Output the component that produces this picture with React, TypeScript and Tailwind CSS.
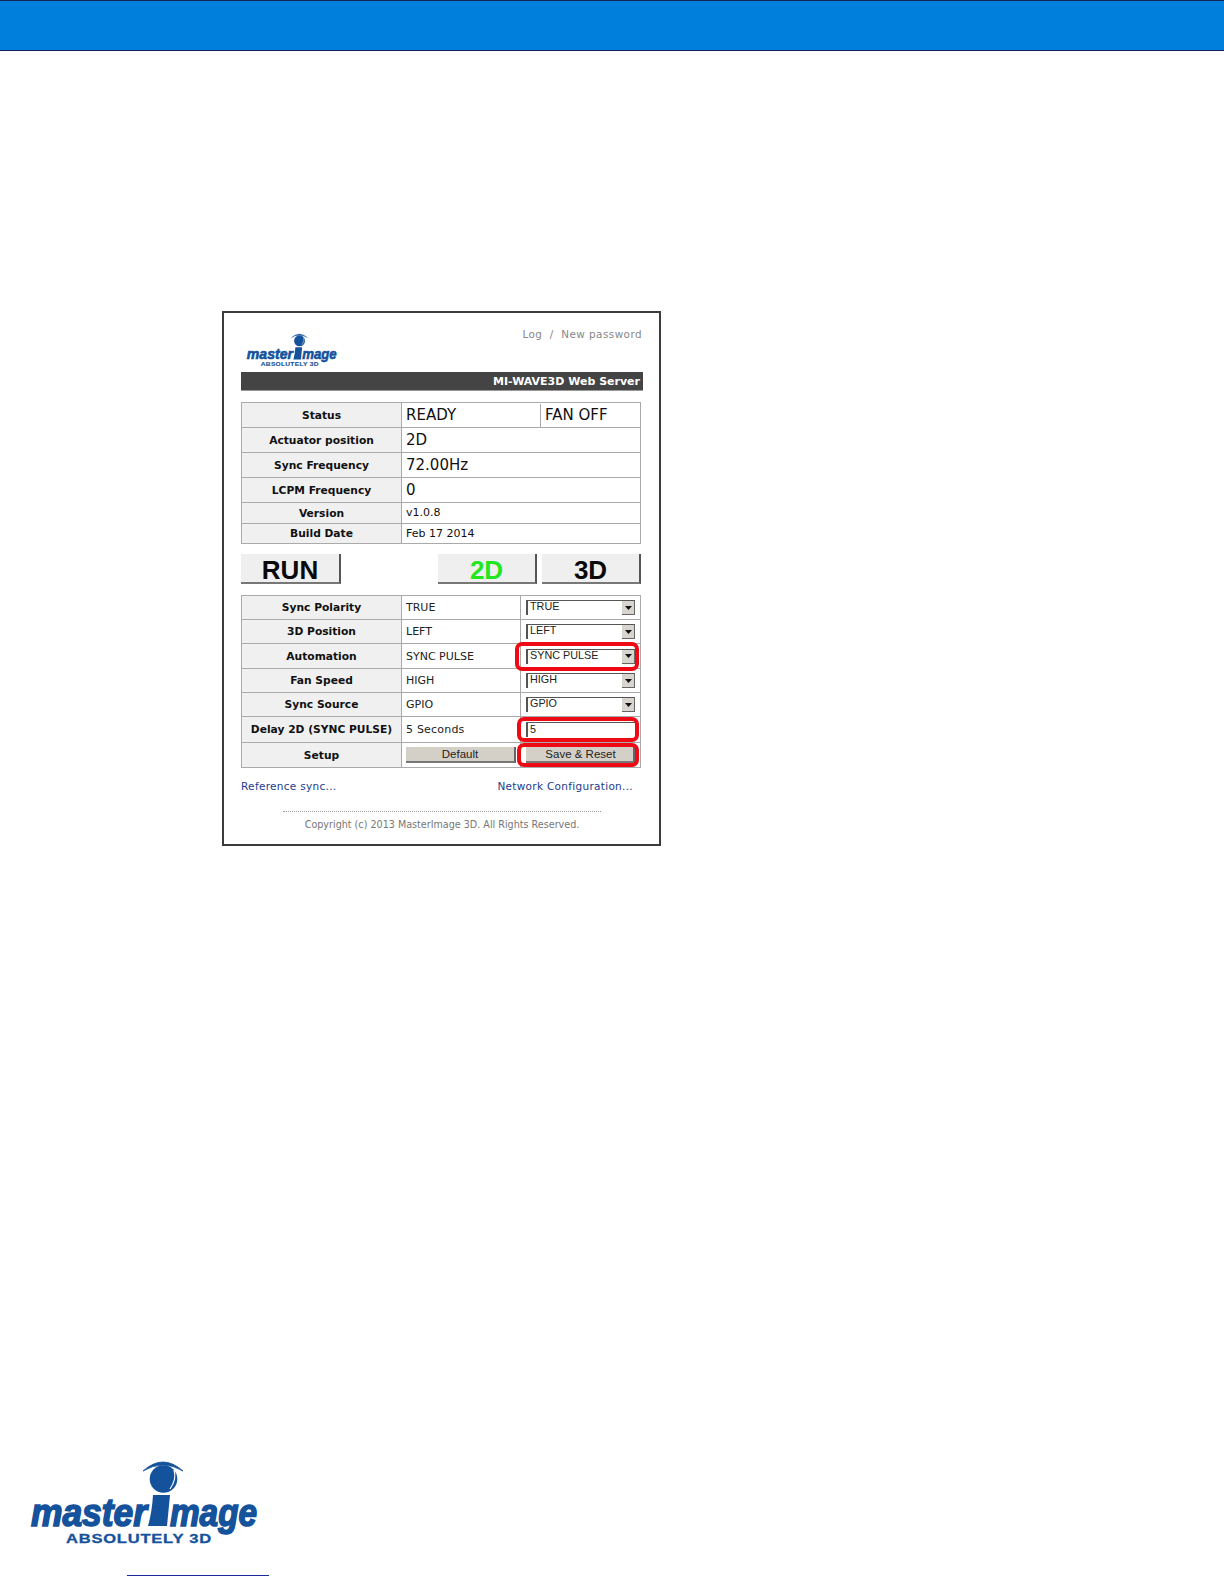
import React from "react";

const SANS = "font-['DejaVu_Sans',Verdana,sans-serif]";
const ARIAL = "font-['Liberation_Sans',Arial,sans-serif]";

function Logo({ className }: { className: string }) {
  const blue = "#14529b";
  return (
    <svg viewBox="0 0 232 88" className={`overflow-visible ${className}`} aria-label="masterImage logo">
      <circle cx="132.5" cy="17" r="13.8" fill={blue} />
      <path d="M143 8 Q146 17 139 27" fill="none" stroke="#fff" strokeWidth="1.2" />
      <path d="M112 9 Q132 -9 152 9 Q132 -3 112 9 Z" fill={blue} stroke={blue} strokeWidth="0.8" />
      <path d="M122 33 L139 33 L136 64 L117 64 Q121 50 122 33 Z" fill={blue} />
      <text x="0" y="64" textLength="116" lengthAdjust="spacingAndGlyphs" fontFamily="Liberation Sans" fontWeight="700" fontStyle="italic" fontSize="38" fill={blue} stroke={blue} strokeWidth="1.6">master</text>
      <text x="139" y="64" textLength="87" lengthAdjust="spacingAndGlyphs" fontFamily="Liberation Sans" fontWeight="700" fontStyle="italic" fontSize="38" fill={blue} stroke={blue} strokeWidth="1.6">mage</text>
      <text x="35" y="81" textLength="146" lengthAdjust="spacingAndGlyphs" fontFamily="Liberation Sans" fontWeight="700" fontSize="13" letterSpacing="0.6" fill={blue} stroke={blue} strokeWidth="0.3">ABSOLUTELY 3D</text>
    </svg>
  );
}

function Label({ children }: { children: React.ReactNode }) {
  return (
    <th className={`border border-[#aaa] bg-[#f0f0f0] p-0 pt-[2px] text-center text-[10.7px] font-bold text-[#111] ${SANS}`}>
      {children}
    </th>
  );
}

function Select({ value }: { value: string }) {
  return (
    <div className={`flex h-[15px] w-[109px] items-start justify-between border-t border-l-2 border-t-[#555] border-l-[#555] bg-white pl-[2px] text-[10.8px] leading-[11px] text-[#222] ${ARIAL}`}>
      <span>{value}</span>
      <span className="flex h-[14px] w-[13px] items-center justify-center border-r border-b border-[#666] bg-[#d8d5ce]">
        <svg width="7" height="4" viewBox="0 0 7 4"><path d="M0 0H7L3.5 4Z" fill="#111" /></svg>
      </span>
    </div>
  );
}

function RedBox({ className }: { className: string }) {
  return <div className={`pointer-events-none absolute rounded-[7px] border-[4px] border-[#ee0a14] ${className}`} />;
}

function BigButton({ children, className }: { children: React.ReactNode; className: string }) {
  return (
    <div className={`flex h-[30px] items-center justify-center border-r-2 border-b-2 border-r-[#555] border-b-[#777] bg-[#efefef] pt-[3px] text-[26px] font-bold leading-none ${ARIAL} ${className}`}>
      {children}
    </div>
  );
}

const infoRows = [
  { label: "Actuator position", value: "2D", h: "h-[25px]", t: "text-[15px]" },
  { label: "Sync Frequency", value: "72.00Hz", h: "h-[25px]", t: "text-[15px]" },
  { label: "LCPM Frequency", value: "0", h: "h-[25px]", t: "text-[15px]" },
  { label: "Version", value: "v1.0.8", h: "h-[21px]", t: "text-[11px]" },
  { label: "Build Date", value: "Feb 17 2014", h: "h-[20px]", t: "text-[11px]" },
];

const selectRows = [
  { label: "Sync Polarity", value: "TRUE", h: "h-[24px]" },
  { label: "3D Position", value: "LEFT", h: "h-[24px]" },
  { label: "Automation", value: "SYNC PULSE", h: "h-[25px]", red: true },
  { label: "Fan Speed", value: "HIGH", h: "h-[24px]" },
  { label: "Sync Source", value: "GPIO", h: "h-[24px]" },
];

export default function App() {
  return (
    <div className="flex h-[1584px] w-[1224px] flex-col overflow-hidden bg-white">
      <header className="h-[51px] shrink-0 border-y border-y-[#14235a] bg-[#0080dc]" />

      <main className="mt-[260px] ml-[222px] h-[535px] w-[439px] border-2 border-[#3c3c3c] px-[17px] pt-[20px]">
        <div className="flex h-[39px] items-start justify-between pl-[5px]">
          <Logo className="mt-px h-[35px] w-[94px]" />
          <div className={`-mt-[5px] w-[122px] text-right text-[10.4px] leading-[12px] tracking-[0.45px] whitespace-pre text-[#888] ${SANS}`}>Log  /  New password</div>
        </div>
        <div className={`flex h-[19px] w-[402px] items-center justify-end border-b border-b-[#999] bg-[#444] pt-[2px] pr-[3px] text-[11px] font-bold text-white ${SANS}`}>
          MI-WAVE3D Web Server
        </div>

        <table className="mt-[11px] w-[399px] table-fixed border-collapse">
          <colgroup>
            <col className="w-[160px]" />
            <col className="w-[239px]" />
          </colgroup>
          <tbody>
            <tr className="h-[25px]">
              <Label>Status</Label>
              <td className="border border-[#aaa] p-0">
                <div className={`flex h-[24px] items-center pt-px text-[15px] text-[#111] ${SANS}`}>
                  <div className="flex h-full w-[139px] items-center border-r border-r-[#aaa] pl-[4px]">READY</div>
                  <div className="pl-[4px]">FAN OFF</div>
                </div>
              </td>
            </tr>
            {infoRows.map((r) => (
              <tr key={r.label} className={r.h}>
                <Label>{r.label}</Label>
                <td className={`border border-[#aaa] p-0 pt-px pl-[4px] text-[#111] ${r.t} ${SANS}`}>{r.value}</td>
              </tr>
            ))}
          </tbody>
        </table>

        <div className="mt-[10px] flex w-[400px] gap-[5px]">
          <BigButton className="mr-[92px] w-[100px] text-[#0a0a0a]">RUN</BigButton>
          <BigButton className="w-[99px] text-[#22e61e]">2D</BigButton>
          <BigButton className="w-[99px] text-[#0a0a0a]">3D</BigButton>
        </div>

        <table className="mt-[11px] w-[399px] table-fixed border-collapse">
          <colgroup>
            <col className="w-[160px]" />
            <col className="w-[119px]" />
            <col className="w-[120px]" />
          </colgroup>
          <tbody>
            {selectRows.map((r) => (
              <tr key={r.label} className={r.h}>
                <Label>{r.label}</Label>
                <td className={`border border-[#aaa] p-0 pt-[2px] pl-[4px] text-[11px] text-[#222] ${SANS}`}>{r.value}</td>
                <td className="relative border border-[#aaa] p-0 pl-[5px]">
                  <Select value={r.value} />
                  {r.red && <RedBox className="-top-[2px] right-[1px] -bottom-[3px] -left-[6px]" />}
                </td>
              </tr>
            ))}
            <tr className="h-[26px]">
              <Label>Delay 2D (SYNC PULSE)</Label>
              <td className={`border border-[#aaa] p-0 pt-[2px] pl-[4px] text-[11px] tracking-[0.2px] text-[#222] ${SANS}`}>5 Seconds</td>
              <td className="relative border border-[#aaa] p-0 pl-[5px]">
                <div className={`h-[15px] w-[109px] border-t border-l-2 border-t-[#555] border-l-[#555] pl-[2px] text-[10.8px] leading-[12px] text-[#222] ${ARIAL}`}>5</div>
                <RedBox className="top-0 right-[1px] bottom-0 -left-[4px]" />
              </td>
            </tr>
            <tr className="h-[25px]">
              <Label>Setup</Label>
              <td className="border border-[#aaa] p-0 pl-[4px]">
                <div className={`flex h-[16px] w-[110px] items-center justify-center border-r-2 border-b-2 border-r-[#666] border-b-[#777] bg-[#d4d0c8] pt-px text-[11.5px] text-[#222] ${ARIAL}`}>Default</div>
              </td>
              <td className="relative border border-[#aaa] p-0 pl-[5px]">
                <div className={`flex h-[16px] w-[109px] items-center justify-center border-r-2 border-b-2 border-r-[#666] border-b-[#777] bg-[#d4d0c8] pt-px pl-[2px] text-[11.5px] text-[#222] ${ARIAL}`}>Save &amp; Reset</div>
                <RedBox className="top-0 right-[1px] bottom-0 -left-[4px]" />
              </td>
            </tr>
          </tbody>
        </table>

        <div className={`mt-[10px] flex w-[392px] justify-between text-[10.5px] leading-[16px] tracking-[0.3px] text-[#1c3c8c] ${SANS}`}>
          <span>Reference sync...</span>
          <span>Network Configuration...</span>
        </div>
        <div className="mt-[17px] ml-[42px] w-[318px] border-t border-dotted border-t-[#999]" />
        <div className={`mt-[6px] w-[402px] text-center text-[9.6px] leading-[14px] text-[#777] ${SANS}`}>
          Copyright (c) 2013 MasterImage 3D. All Rights Reserved.
        </div>
      </main>

      <footer className="mt-auto pb-[8px]">
        <Logo className="ml-[31px] h-[88px] w-[232px]" />
        <div className="mt-[25px] ml-[127px] h-px w-[142px] bg-[#1a2aa0]" />
      </footer>
    </div>
  );
}
